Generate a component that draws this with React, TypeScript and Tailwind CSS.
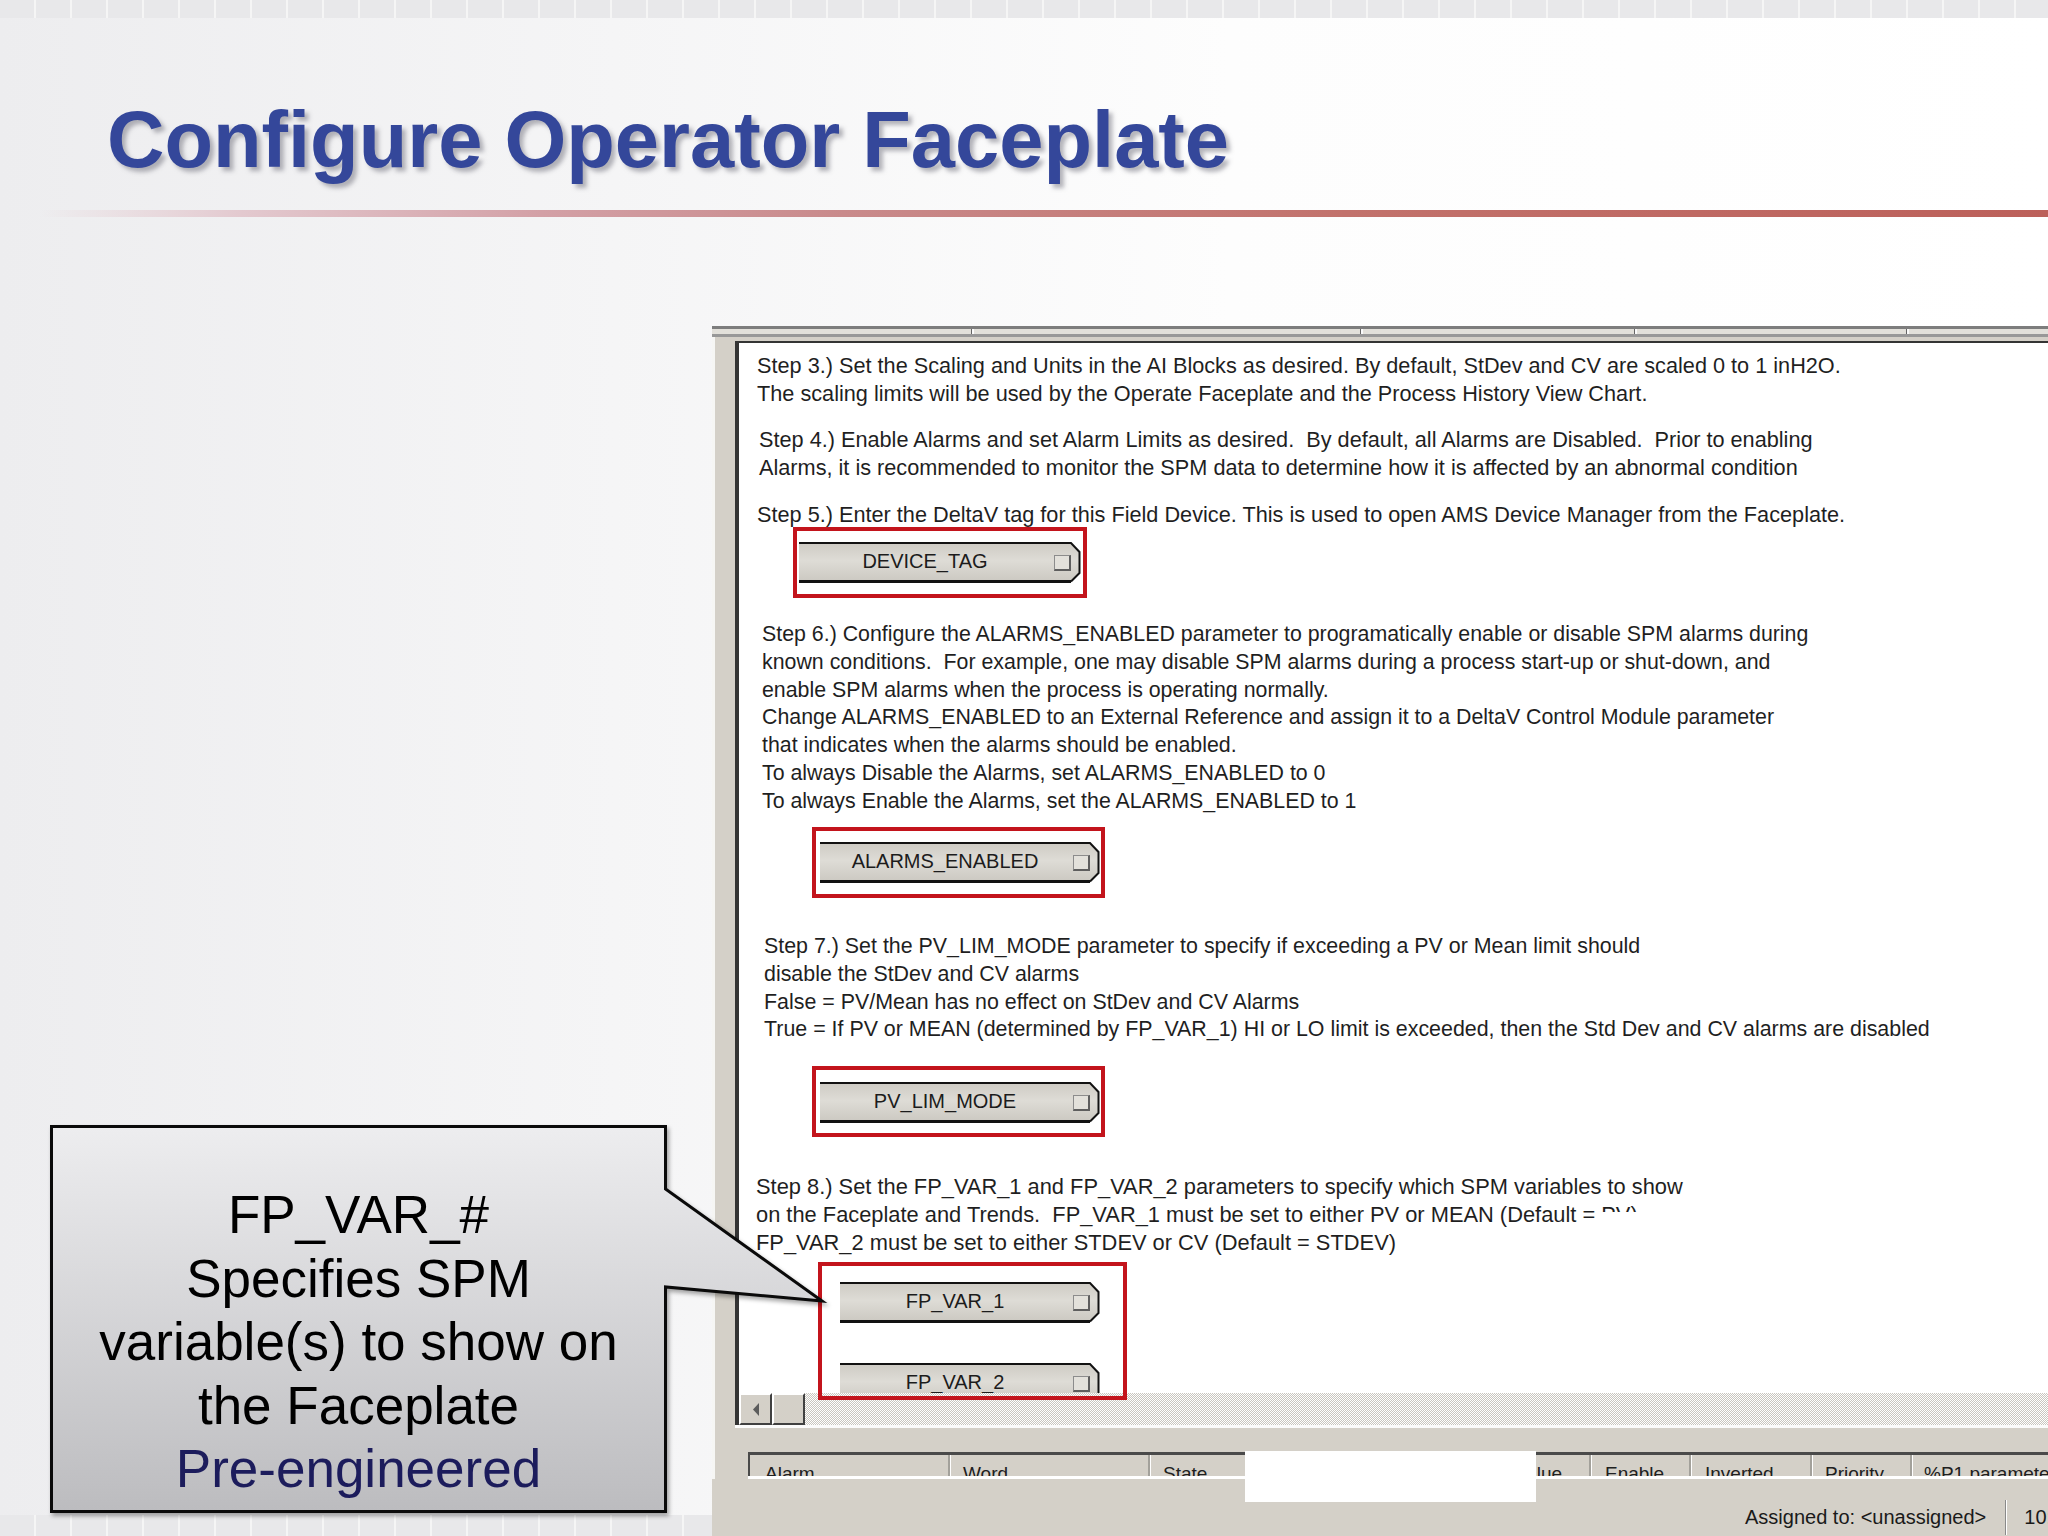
import React from 'react';

const SANS = "font-['Liberation_Sans',Arial,sans-serif]";

type TagButtonProps = {
  label: string;
  w: number;
  widthClass: string;
};

// DeltaV style parameter button with a chamfered right end
function TagButton({ label, w, widthClass }: TagButtonProps) {
  const gid = `btn-${label}`;
  return (
    <div className={`relative h-[41px] shrink-0 ${widthClass}`}>
      <svg className="absolute inset-0" width={w} height={41} viewBox={`0 0 ${w} 41`}>
        <defs>
          <linearGradient id={gid} x1="0" y1="0" x2="0" y2="1">
            <stop offset="0" stopColor="#cecbc4" />
            <stop offset="0.45" stopColor="#dedcd6" />
            <stop offset="1" stopColor="#cbc8c1" />
          </linearGradient>
        </defs>
        <polygon points={`0,1 ${w - 10},1 ${w - 1},10 ${w - 1},31 ${w - 10},40 0,40`} fill={`url(#${gid})`} />
        <polyline
          points={`0,1 ${w - 10},1 ${w - 1.5},10 ${w - 1.5},31 ${w - 10},39.5`}
          fill="none"
          stroke="#121212"
          strokeWidth="2"
        />
        <line x1="0" y1="39.5" x2={w - 10} y2="39.5" stroke="#121212" strokeWidth="3" />
      </svg>
      <div className="relative flex h-full items-center justify-center pb-[2px] pr-[30px] text-[20px] text-[#1c1c1c]">
        {label}
      </div>
      <div className="absolute right-[10px] top-[13px] h-[16px] w-[17px] border border-[#8c8c8c] border-b-2 border-r-2 border-b-[#5e5e5e] border-r-[#5e5e5e] bg-[#e3e1db]" />
    </div>
  );
}

function HeaderCell({ label, className }: { label: string; className: string }) {
  return (
    <div className={`h-full shrink-0 overflow-hidden border-l-2 border-[#a3a19b] pt-[5px] shadow-[inset_1px_0_0_#ffffff] ${className}`}>
      <span className="whitespace-pre leading-[22px]">{label}</span>
    </div>
  );
}

export default function App() {
  return (
    <div
      className={`relative flex h-[1536px] w-[2048px] flex-col overflow-hidden bg-[linear-gradient(90deg,#ededef_0%,#f5f5f6_30%,#fdfdfd_60%,#ffffff_100%)] ${SANS}`}
    >
      {/* slide top strip */}
      <div className="h-[18px] shrink-0 bg-[repeating-linear-gradient(90deg,#e8e8ea_0px,#e8e8ea_34px,#f5f5f5_34px,#f5f5f5_36px)]" />

      {/* title */}
      <h1 className="mt-[82px] shrink-0 whitespace-pre pl-[107px] text-[79.5px] font-bold leading-[80px] text-[#34479a] [text-shadow:4px_4px_4px_rgba(110,110,122,0.5)]">
        Configure Operator Faceplate
      </h1>

      {/* red rule */}
      <div className="ml-[40px] mt-[30px] h-[7px] shrink-0 bg-[linear-gradient(90deg,rgba(255,255,255,0)_0%,#e3c9cf_10%,#d3a0a6_25%,#c98a8b_40%,#c2726c_65%,#bc605a_100%)]" />

      <div className="flex min-h-0 flex-1">
        {/* left column: callout */}
        <div className="flex w-[712px] shrink-0 flex-col justify-end">
          <div className="relative z-20 ml-[50px] h-[388px] w-[617px] shrink-0">
            <svg
              className="absolute left-0 top-0 overflow-visible drop-shadow-[2px_3px_2px_rgba(0,0,0,0.35)]"
              width={790}
              height={392}
              viewBox="0 0 790 392"
            >
              <defs>
                <linearGradient id="callout-fill" x1="0" y1="0" x2="0" y2="1">
                  <stop offset="0" stopColor="#ededef" />
                  <stop offset="1" stopColor="#bcbcbf" />
                </linearGradient>
              </defs>
              <path
                d="M1.5,1.5 H615.5 V64 L772,176 L615.5,162 V386.5 H1.5 Z"
                fill="url(#callout-fill)"
                stroke="#0a0a0a"
                strokeWidth="3"
                strokeLinejoin="miter"
              />
            </svg>
            <div className="relative flex flex-col items-center pt-[58px] text-[53px] leading-[63.5px] text-black">
              <span>FP_VAR_#</span>
              <span>Specifies SPM</span>
              <span>variable(s) to show on</span>
              <span>the Faceplate</span>
              <span className="text-[#1c1c5c]">Pre-engineered</span>
            </div>
          </div>
          <div className="mt-[2px] h-[21px] shrink-0 bg-[repeating-linear-gradient(90deg,#e8e8ea_0px,#e8e8ea_34px,#f5f5f5_34px,#f5f5f5_36px)]" />
        </div>

        {/* right column: DeltaV screen capture */}
        <div className="min-w-0 flex-1 pt-[109px]">
          <div className="relative flex h-full flex-col bg-[#d4d0c8]">
            {/* window edge bar */}
            <div className="flex h-[11px] shrink-0 border-b-[3px] border-t-[3px] border-b-[#989898] border-t-[#7d7d7d] bg-[#e2e0da]">
              <div className="w-[259px] shrink-0" />
              <div className="h-full w-[3px] border-l border-[#666666] bg-[#fafafa]" />
              <div className="w-[386px] shrink-0" />
              <div className="h-full w-[3px] border-l border-[#666666] bg-[#fafafa]" />
              <div className="w-[271px] shrink-0" />
              <div className="h-full w-[3px] border-l border-[#666666] bg-[#fafafa]" />
              <div className="w-[269px] shrink-0" />
              <div className="h-full w-[3px] border-l border-[#666666] bg-[#fafafa]" />
            </div>

            <div className="flex shrink-0 flex-col border-l-[3px] border-[#f6f6f4]">
              <div className="flex pt-[4px]">
                <div className="w-[20px] shrink-0" />
                <div className="min-w-0 flex-1 border-l-[4px] border-t-[2px] border-[#343434]">
                  {/* configuration text area */}
                  <div className="flex h-[1050px] flex-col items-start bg-white leading-[27.8px] text-[#1f1f1f]">
                    <p className="ml-[18px] mt-[9px] shrink-0 whitespace-pre text-[21.7px]">
                      {'Step 3.) Set the Scaling and Units in the AI Blocks as desired. By default, StDev and CV are scaled 0 to 1 inH2O.\nThe scaling limits will be used by the Operate Faceplate and the Process History View Chart.'}
                    </p>
                    <p className="ml-[20px] mt-[18.4px] shrink-0 whitespace-pre text-[21.7px]">
                      {'Step 4.) Enable Alarms and set Alarm Limits as desired.  By default, all Alarms are Disabled.  Prior to enabling\nAlarms, it is recommended to monitor the SPM data to determine how it is affected by an abnormal condition'}
                    </p>
                    <p className="ml-[18px] mt-[19.4px] shrink-0 whitespace-pre text-[21.7px]">
                      {'Step 5.) Enter the DeltaV tag for this Field Device. This is used to open AMS Device Manager from the Faceplate.'}
                    </p>
                    <div className="relative z-10 ml-[54px] mt-[-1.8px] h-[71px] w-[294px] shrink-0 border-4 border-[#c3141c] pl-[2px] pt-[11px]">
                      <TagButton label="DEVICE_TAG" w={282} widthClass="w-[282px]" />
                    </div>
                    <p className="ml-[23px] mt-[23px] shrink-0 whitespace-pre text-[21.35px]">
                      {'Step 6.) Configure the ALARMS_ENABLED parameter to programatically enable or disable SPM alarms during\nknown conditions.  For example, one may disable SPM alarms during a process start-up or shut-down, and\nenable SPM alarms when the process is operating normally.\nChange ALARMS_ENABLED to an External Reference and assign it to a DeltaV Control Module parameter\nthat indicates when the alarms should be enabled.\nTo always Disable the Alarms, set ALARMS_ENABLED to 0\nTo always Enable the Alarms, set the ALARMS_ENABLED to 1'}
                    </p>
                    <div className="ml-[73px] mt-[11.4px] h-[71px] w-[293px] shrink-0 border-4 border-[#c3141c] pl-[4px] pt-[11px]">
                      <TagButton label="ALARMS_ENABLED" w={280} widthClass="w-[280px]" />
                    </div>
                    <p className="ml-[25px] mt-[35px] shrink-0 whitespace-pre text-[21.4px]">
                      {'Step 7.) Set the PV_LIM_MODE parameter to specify if exceeding a PV or Mean limit should\ndisable the StDev and CV alarms\nFalse = PV/Mean has no effect on StDev and CV Alarms\nTrue = If PV or MEAN (determined by FP_VAR_1) HI or LO limit is exceeded, then the Std Dev and CV alarms are disabled'}
                    </p>
                    <div className="ml-[73px] mt-[21.8px] h-[71px] w-[293px] shrink-0 border-4 border-[#c3141c] pl-[4px] pt-[12px]">
                      <TagButton label="PV_LIM_MODE" w={280} widthClass="w-[280px]" />
                    </div>
                    <p className="ml-[17px] mt-[36px] shrink-0 whitespace-pre text-[21.85px]">
                      {'Step 8.) Set the FP_VAR_1 and FP_VAR_2 parameters to specify which SPM variables to show\non the Faceplate and Trends.  FP_VAR_1 must be set to either PV or MEAN (Default = '}
                      <span className="inline-block h-[11px] overflow-hidden align-top leading-[27.8px]">PV)</span>
                      {'\nFP_VAR_2 must be set to either STDEV or CV (Default = STDEV)'}
                    </p>
                    <div className="relative z-10 ml-[79px] mt-[5.6px] h-[138px] w-[309px] shrink-0 border-4 border-[#c3141c] pl-[18px] pt-[16px]">
                      <div className="flex h-[111px] flex-col gap-[40px] overflow-hidden">
                        <TagButton label="FP_VAR_1" w={260} widthClass="w-[260px]" />
                        <TagButton label="FP_VAR_2" w={260} widthClass="w-[260px]" />
                      </div>
                    </div>
                  </div>

                  {/* horizontal scrollbar */}
                  <div className="flex h-[32px] bg-[repeating-conic-gradient(#c9c6bf_0%_25%,#ffffff_0%_50%)] [background-size:2px_2px]">
                    <div className="flex w-[33px] shrink-0 items-center justify-center border-2 border-b-[#404040] border-l-white border-r-[#404040] border-t-white bg-[#d4d0c8]">
                      <svg width="8" height="13" viewBox="0 0 8 13">
                        <polygon points="7,0 7,13 1,6.5" fill="#5c5c5c" />
                      </svg>
                    </div>
                    <div className="w-[33px] shrink-0 border-2 border-b-[#404040] border-l-white border-r-[#404040] border-t-white bg-[#d4d0c8]" />
                  </div>
                </div>
              </div>
              <div className="ml-[20px] h-[3px] bg-[#fbfbfb]" />
              <div className="h-[24px]" />

              {/* alarm list header, cut off */}
              <div className="ml-[33px] flex h-[24px] border-l-2 border-t-[3px] border-[#4a4a4a] text-[19px] text-[#202020]">
                <div className="h-full w-[198px] shrink-0 overflow-hidden pl-[15px] pt-[5px]">
                  <span className="whitespace-pre leading-[22px]">Alarm</span>
                </div>
                <HeaderCell label="Word" className="w-[200px] pl-[13px]" />
                <HeaderCell label="State" className="w-[200px] pl-[13px]" />
                <HeaderCell label="Description" className="w-[152px] pl-[13px]" />
                <HeaderCell label="Value" className="w-[89px] pl-[13px]" />
                <HeaderCell label="Enable" className="w-[100px] pl-[14px]" />
                <HeaderCell label="Inverted" className="w-[121px] pl-[14px]" />
                <HeaderCell label="Priority" className="w-[100px] pl-[13px]" />
                <HeaderCell label="%P1 parameter" className="w-[200px] pl-[12px]" />
              </div>
              <div className="ml-[33px] h-[3px] bg-white" />
            </div>

            {/* status bar */}
            <div className="flex h-[57px] shrink-0 items-center pl-[1033px] pt-[19px] text-[20px] text-[#1a1a1a]">
              <span className="whitespace-pre">{'Assigned to: <unassigned>'}</span>
              <div className="ml-[19px] h-[35px] w-[2px] shrink-0 border-l border-[#8a8a8a] bg-white" />
              <span className="ml-[17px] whitespace-pre">10:42</span>
            </div>

            {/* white patch over the header */}
            <div className="absolute left-[533px] top-[1125px] h-[51px] w-[291px] bg-white" />
          </div>
        </div>
      </div>
    </div>
  );
}
